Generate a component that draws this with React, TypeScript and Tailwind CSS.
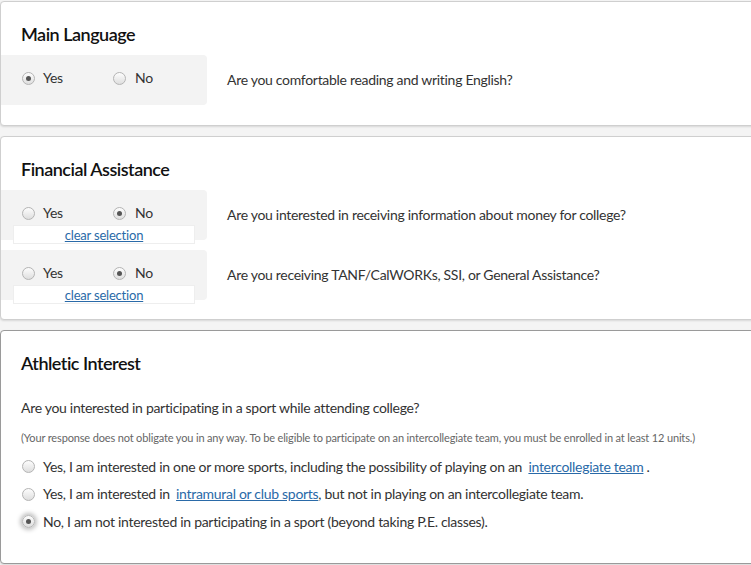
import type { ReactNode } from 'react'

function Radio({ checked, focused }: { checked?: boolean; focused?: boolean }) {
  return (
    <span
      className={
        'inline-flex h-[13px] w-[13px] shrink-0 items-center justify-center rounded-full border border-[#b4b4b4] bg-gradient-to-b from-[#fdfdfd] to-[#dedede] ' +
        (focused ? 'shadow-[0_0_4px_2px_rgba(0,0,0,0.25)]' : '')
      }
    >
      {checked && <span className="h-[5px] w-[5px] rounded-full bg-[#555]" />}
    </span>
  )
}

function Card({ title, children, dark }: { title: string; children: ReactNode; dark?: boolean }) {
  return (
    <div
      className={
        'w-[770px] rounded-[4px] border bg-white shadow-[0_1px_2px_rgba(0,0,0,0.12)] ' +
        (dark ? 'border-[#9a9a9a]' : 'border-[#cfcfcf]')
      }
    >
      <h2 className="px-5 pt-[20px] text-[18px] font-semibold leading-6 tracking-[-0.5px] text-[#111]">{title}</h2>
      {children}
    </div>
  )
}

function YesNo({ answer, question, clear }: { answer: 'yes' | 'no'; question: string; clear?: boolean }) {
  return (
    <div className="flex items-start">
      <div className="relative h-[50px] w-[206px] shrink-0 rounded-r-[4px] bg-[#f3f3f3]">
        <div className="flex items-center pt-[13px]">
          <label className="flex w-[112px] items-center gap-[8px] pl-[21px]">
            <Radio checked={answer === 'yes'} />
            <span className="text-[14px] leading-5 tracking-[-0.3px] text-[#333]">Yes</span>
          </label>
          <label className="flex items-center gap-[9px]">
            <Radio checked={answer === 'no'} />
            <span className="text-[14px] leading-5 tracking-[-0.3px] text-[#333]">No</span>
          </label>
        </div>
        {clear && (
          <div className="absolute left-[12px] top-[35px] flex h-[19px] w-[182px] items-center justify-center border border-[#eee] bg-white">
            <a className="text-[13px] leading-4 tracking-[-0.2px] text-[#2a6aa8] underline">clear selection</a>
          </div>
        )}
      </div>
      <p className="pl-5 pt-[15px] text-[14px] leading-5 tracking-[-0.3px] text-[#333]">{question}</p>
    </div>
  )
}

function Option({ checked, focused, children }: { checked?: boolean; focused?: boolean; children: ReactNode }) {
  return (
    <label className="flex h-[27.5px] items-center gap-[8px] pl-[21px]">
      <Radio checked={checked} focused={focused} />
      <span className="text-[14px] leading-5 tracking-[-0.3px] text-[#333]">{children}</span>
    </label>
  )
}

export default function App() {
  return (
    <div
      className="h-[565px] w-[751px] overflow-hidden bg-[#f4f4f4]"
      style={{ fontFamily: '"Source Sans Pro", Lato, "Noto Sans", sans-serif' }}
    >
      <div className="flex flex-col gap-[10px] pt-px">
        <Card title="Main Language">
          <div className="mt-[9px] pb-[20px]">
            <YesNo answer="yes" question="Are you comfortable reading and writing English?" />
          </div>
        </Card>

        <Card title="Financial Assistance">
          <div className="mt-[9px] flex flex-col gap-[10px] pb-[19px]">
            <YesNo answer="no" clear question="Are you interested in receiving information about money for college?" />
            <YesNo answer="no" clear question="Are you receiving TANF/CalWORKs, SSI, or General Assistance?" />
          </div>
        </Card>

        <Card title="Athletic Interest" dark>
          <div className="px-5">
            <p className="mt-[23px] text-[14px] leading-5 tracking-[-0.3px] text-[#333]">
              Are you interested in participating in a sport while attending college?
            </p>
            <p className="mt-[12px] whitespace-nowrap text-[11px] leading-4 tracking-[-0.15px] text-[#666]">
              (Your response does not obligate you in any way. To be eligible to participate on an intercollegiate team, you must be enrolled in at least 12 units.)
            </p>
          </div>
          <div className="mt-[7px] pb-[27px]">
            <Option>
              Yes, I am interested in one or more sports, including the possibility of playing on an{' '}
              <a className="ml-[3px] text-[#2a6aa8] underline">intercollegiate team</a>
              <span className="ml-[3px]">.</span>
            </Option>
            <Option>
              Yes, I am interested in <a className="ml-[3px] text-[#2a6aa8] underline">intramural or club sports</a>
              <span>, but not in playing on an intercollegiate team.</span>
            </Option>
            <Option checked focused>
              No, I am not interested in participating in a sport (beyond taking P.E. classes).
            </Option>
          </div>
        </Card>
      </div>
    </div>
  )
}
